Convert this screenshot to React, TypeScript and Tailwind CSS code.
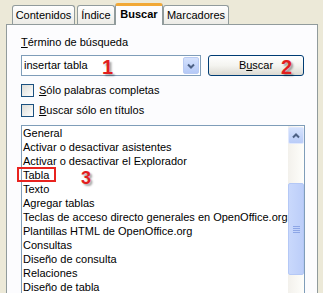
import React from 'react';

const items = [
  'General',
  'Activar o desactivar asistentes',
  'Activar o desactivar el Explorador',
  'Tabla',
  'Texto',
  'Agregar tablas',
  'Teclas de acceso directo generales en OpenOffice.org',
  'Plantillas HTML de OpenOffice.org',
  'Consultas',
  'Diseño de consulta',
  'Relaciones',
  'Diseño de tabla',
];

const marker = 'absolute font-bold text-[#E21E1E] [font-family:"Liberation_Sans",Arial,sans-serif] [text-shadow:2px_2px_2px_rgba(0,0,0,0.35)] leading-none';

function Tab({ label, w }: { label: string; w: string }) {
  return (
    <div
      className={`${w} h-[19px] mr-[1px] flex items-center justify-center rounded-t-[3px] border border-b-0 border-[#919B9C] bg-gradient-to-b from-white to-[#ECEBE6] text-black`}
    >
      {label}
    </div>
  );
}

function Checkbox({ children }: { children: React.ReactNode }) {
  return (
    <div className="flex items-center h-[13px]">
      <div className="w-[13px] h-[13px] border border-[#1C5180] bg-gradient-to-br from-[#DCDCD7] to-white" />
      <span className="ml-[5px]">{children}</span>
    </div>
  );
}

export default function App() {
  return (
    <div className='w-[323px] h-[293px] overflow-hidden bg-[#ECE9D8] text-[11px] leading-[13px] text-black [font-family:"Liberation_Sans",Arial,sans-serif]'>
      {/* Tabs */}
      <div className="flex items-end h-[21px] mt-[3px] ml-[12px]">
        <Tab label="Contenidos" w="w-[63px]" />
        <div className="w-[1px]" />
        <Tab label="Índice" w="w-[38px]" />
        <div className="relative z-10 w-[48px] h-[22px] -mb-px -ml-[1px] flex items-center justify-center pb-[2px] rounded-t-[3px] border-x border-[#919B9C] border-t-[3px] border-t-[#F1A836] bg-[#FCFCFE] font-bold">
          Buscar
        </div>
        <Tab label="Marcadores" w="w-[66px]" />
      </div>

      {/* Panel */}
      <div className="ml-[6px] w-[312px] h-[300px] border border-[#919B9C] bg-[#FCFCFE] pl-[14px] pt-[11px]">
        <div>
          <u>T</u>érmino de búsqueda
        </div>

        <div className="flex mt-[6px]">
          <div className="relative w-[180px] h-[21px] border border-[#7F9DB9] bg-white flex items-center pl-[2px]">
            <span>insertar tabla</span>
            <span className={`${marker} text-[20px] left-[80px] top-[1px]`}>1</span>
            <div className="absolute right-[1px] top-[1px] w-[16px] h-[17px] rounded-[2px] border border-[#B9CBF3] bg-gradient-to-b from-[#D5E2FD] to-[#B5C9F7] flex items-center justify-center">
              <svg width="8" height="6" viewBox="0 0 8 6">
                <polyline points="1,1.5 4,4.5 7,1.5" fill="none" stroke="#4D6185" strokeWidth="2" />
              </svg>
            </div>
          </div>
          <div className="relative ml-[7px] w-[96px] h-[21px] rounded-[3px] border border-[#003C74] bg-gradient-to-b from-white via-[#F4F4F0] to-[#DCDAD2] flex items-center justify-center">
            <span>
              B<u>u</u>scar
            </span>
            <span className={`${marker} text-[20px] left-[72px] top-[1px]`}>2</span>
          </div>
        </div>

        <div className="mt-[8px]">
          <Checkbox>
            <u>S</u>ólo palabras completas
          </Checkbox>
        </div>
        <div className="mt-[7px]">
          <Checkbox>
            <u>B</u>uscar sólo en títulos
          </Checkbox>
        </div>

        {/* List */}
        <div className="mt-[8px] w-[284px] h-[200px] border border-[#7F9DB9] bg-white flex">
          <div className="flex-1 pl-[1px]">
            {items.map((t) => (
              <div key={t} className="relative h-[14px] leading-[14px] whitespace-nowrap">
                {t}
                {t === 'Tabla' && (
                  <>
                    <div className="absolute left-[-6px] top-[-1px] w-[39px] h-[15px] border-2 border-[#E8231F]" />
                    <span className={`${marker} text-[18px] left-[58px] top-[1px]`}>3</span>
                  </>
                )}
              </div>
            ))}
          </div>
          <div className="w-[16px] bg-gradient-to-r from-[#F3F1EC] to-[#FEFEFB] flex flex-col">
            <div className="mt-[1px] h-[17px] rounded-[2px] border border-[#E0E8FD] bg-gradient-to-b from-[#D5E2FD] to-[#B9CCF8] flex items-center justify-center">
              <svg width="8" height="6" viewBox="0 0 8 6">
                <polyline points="1,4.5 4,1.5 7,4.5" fill="none" stroke="#4D6185" strokeWidth="2" />
              </svg>
            </div>
            <div className="mt-[39px] h-[92px] rounded-[2px] border border-[#B4C8F6] bg-gradient-to-r from-[#C9D8FC] to-[#BCCEF9] flex items-center justify-center">
              <div className="flex flex-col gap-[1px]">
                <div className="w-[7px] h-[1px] bg-[#8DA6E6]" />
                <div className="w-[7px] h-[1px] bg-[#8DA6E6]" />
                <div className="w-[7px] h-[1px] bg-[#8DA6E6]" />
                <div className="w-[7px] h-[1px] bg-[#8DA6E6]" />
              </div>
            </div>
          </div>
        </div>
      </div>
    </div>
  );
}
